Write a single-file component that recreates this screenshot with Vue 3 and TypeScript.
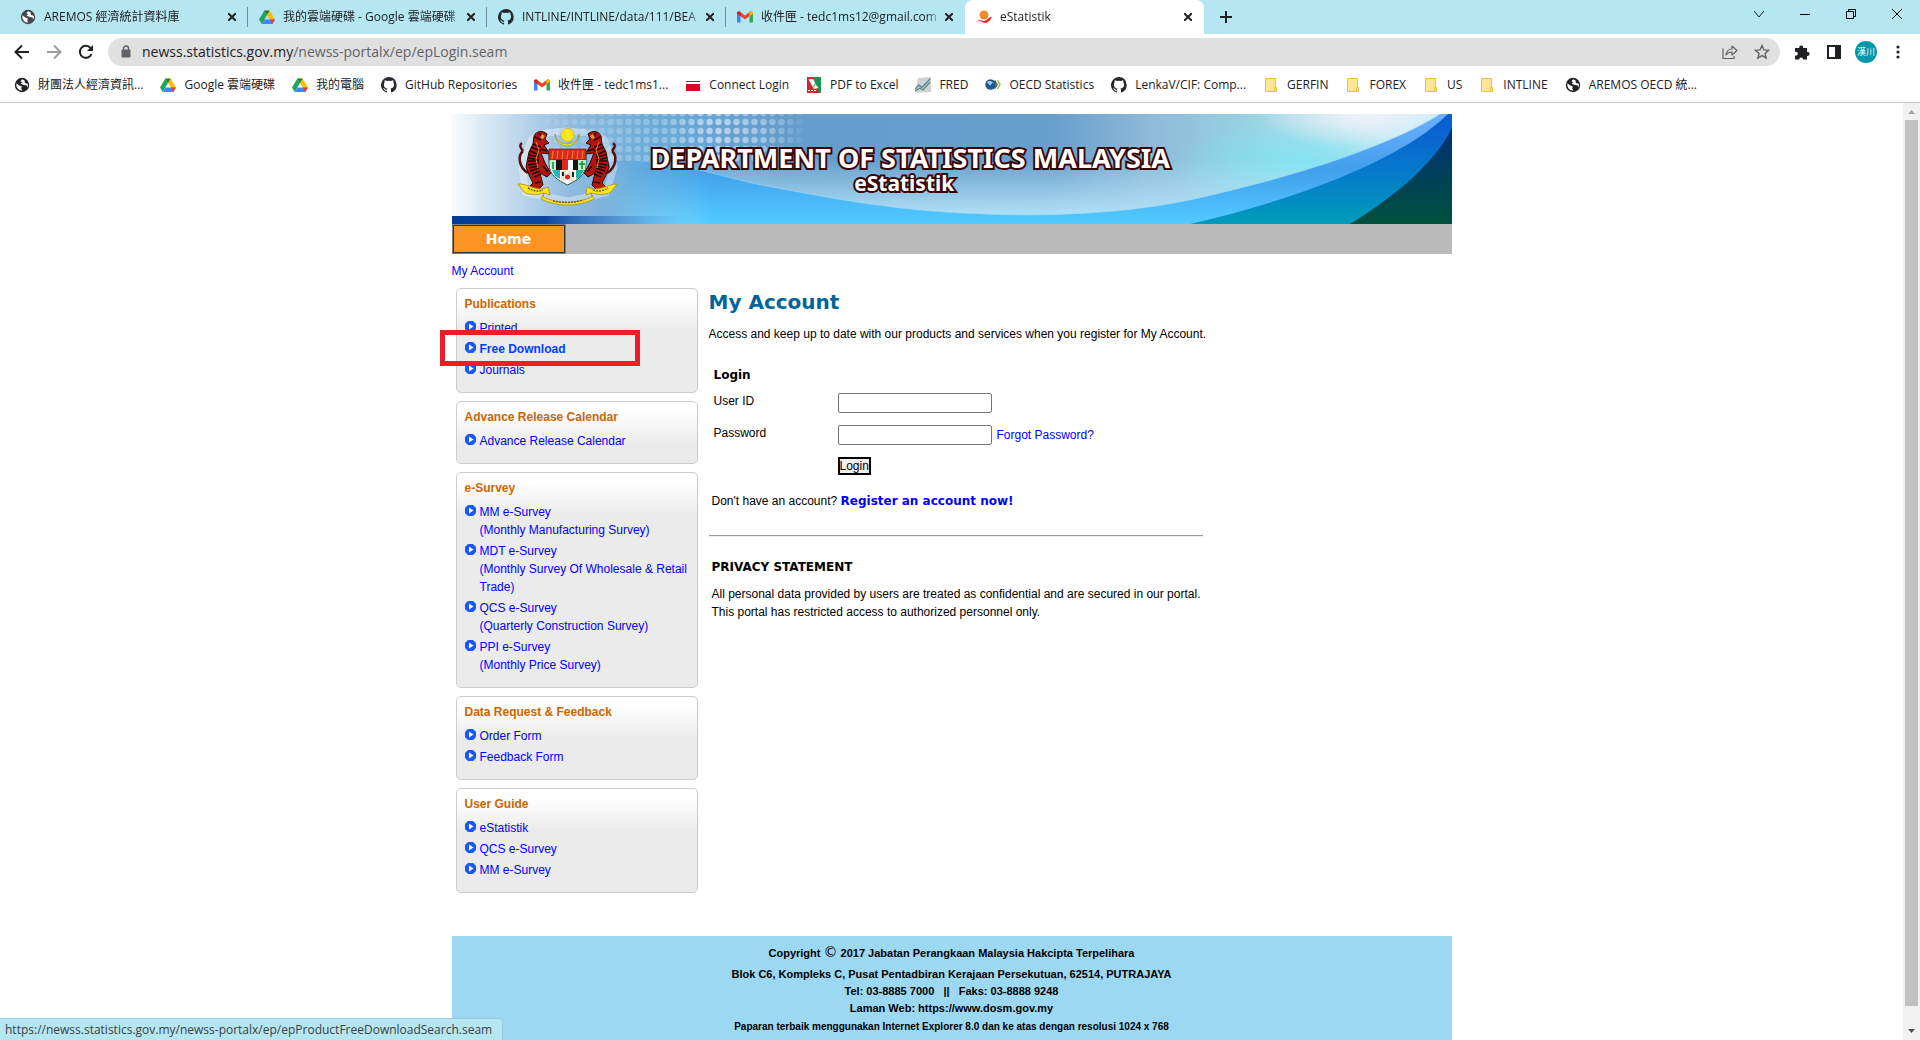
<script setup lang="ts">
import { ref } from 'vue'

interface Tab {
  icon: string
  title: string
  active?: boolean
}
interface Bookmark {
  icon: string
  title: string
}
interface MenuItem {
  label: string
  detail?: string
  hover?: boolean
}
interface Panel {
  title: string
  items: MenuItem[]
}

const tabs: Tab[] = [
  { icon: 'globe', title: 'AREMOS 經濟統計資料庫' },
  { icon: 'drive', title: '我的雲端硬碟 - Google 雲端硬碟' },
  { icon: 'github', title: 'INTLINE/INTLINE/data/111/BEA' },
  { icon: 'gmail', title: '收件匣 - tedc1ms12@gmail.com' },
  { icon: 'estat', title: 'eStatistik', active: true },
]

const bookmarks: Bookmark[] = [
  { icon: 'globe', title: '財團法人經濟資訊...' },
  { icon: 'drive', title: 'Google 雲端硬碟' },
  { icon: 'drive', title: '我的電腦' },
  { icon: 'github', title: 'GitHub Repositories' },
  { icon: 'gmail', title: '收件匣 - tedc1ms1...' },
  { icon: 'connect', title: 'Connect Login' },
  { icon: 'pdf', title: 'PDF to Excel' },
  { icon: 'fred', title: 'FRED' },
  { icon: 'oecd', title: 'OECD Statistics' },
  { icon: 'github', title: 'LenkaV/CIF: Comp...' },
  { icon: 'folder', title: 'GERFIN' },
  { icon: 'folder', title: 'FOREX' },
  { icon: 'folder', title: 'US' },
  { icon: 'folder', title: 'INTLINE' },
  { icon: 'globe', title: 'AREMOS OECD 統...' },
]

const panels: Panel[] = [
  {
    title: 'Publications',
    items: [{ label: 'Printed' }, { label: 'Free Download', hover: true }, { label: 'Journals' }],
  },
  { title: 'Advance Release Calendar', items: [{ label: 'Advance Release Calendar' }] },
  {
    title: 'e-Survey',
    items: [
      { label: 'MM e-Survey', detail: '(Monthly Manufacturing Survey)' },
      { label: 'MDT e-Survey', detail: '(Monthly Survey Of Wholesale & Retail Trade)' },
      { label: 'QCS e-Survey', detail: '(Quarterly Construction Survey)' },
      { label: 'PPI e-Survey', detail: '(Monthly Price Survey)' },
    ],
  },
  { title: 'Data Request & Feedback', items: [{ label: 'Order Form' }, { label: 'Feedback Form' }] },
  {
    title: 'User Guide',
    items: [{ label: 'eStatistik' }, { label: 'QCS e-Survey' }, { label: 'MM e-Survey' }],
  },
]

const userId = ref('')
const password = ref('')
</script>

<template>
  <div class="browser">
    <svg class="sprite" aria-hidden="true">
      <symbol id="globe" viewBox="0 0 16 16">
        <circle cx="8" cy="8" r="7.2" fill="currentColor" />
        <path d="M2.4 6.2 5.2 8.6 7.8 9.2 7.2 11.4 8.4 13.6A6 6 0 0 1 2.4 6.2ZM8.2 2.2 6.4 4.2 8.4 5.2 6.4 6.4 9.8 8 12.4 8.2 13.2 10.6A6 6 0 0 0 13.8 6.8L11 6 10.6 3.4Z" fill="#fff" />
      </symbol>
      <symbol id="drive" viewBox="0 0 16 16">
        <path d="M5.4 1.5h5.2L16 10.6h-5.2Z" fill="#fbbc04" />
        <path d="M5.4 1.5 8 6 2.7 15 0 10.6Z" fill="#1fa463" />
        <path d="M2.7 15 5.3 10.6H16L13.4 15Z" fill="#4285f4" />
        <path d="M10.8 10.6H16L13.4 15Z" fill="#ea4335" />
        <path d="M5.4 1.5h5.2L8 6Z" fill="#188038" />
      </symbol>
      <symbol id="github" viewBox="0 0 16 16">
        <path fill="#24292f" d="M8 0a8 8 0 0 0-2.5 15.6c.4.1.5-.2.5-.4v-1.500c-2.200.5-2.700-1-2.700-1-.4-.9-.9-1.200-.9-1.200-.7-.5.100-.5.100-.5.800.100 1.200.8 1.200.8.7 1.300 1.900.9 2.300.7.100-.5.300-.9.500-1.100-1.800-.2-3.600-.9-3.600-4 0-.9.300-1.600.8-2.100-.1-.2-.4-1 .1-2.100 0 0 .7-.2 2.200.8a7.600 7.600 0 0 1 4 0c1.500-1 2.200-.8 2.200-.8.4 1.100.2 1.900.1 2.100.5.600.8 1.300.8 2.100 0 3.100-1.900 3.700-3.700 3.900.3.300.6.800.6 1.500v2.200c0 .2.100.5.600.4A8 8 0 0 0 8 0Z" />
      </symbol>
      <symbol id="gmail" viewBox="0 0 16 16">
        <path d="M0 4.200V13.500h3.500V7Z" fill="#4285f4" />
        <path d="M12.500 7V13.500H16V4.200Z" fill="#34a853" />
        <path d="M0 4.200C0 2.600 1.800 1.800 3 2.700L8 6.500 13 2.700C14.200 1.800 16 2.600 16 4.200L12.500 7.200 8 10.500 3.500 7.200Z" fill="#ea4335" />
        <path d="M0 4.200C0 2.600 1.800 1.800 3.500 3V7.200L0 4.700Z" fill="#c5221f" />
        <path d="M16 4.200C16 2.600 14.200 1.800 12.500 3V7.200L16 4.700Z" fill="#fbbc04" />
      </symbol>
      <symbol id="estat" viewBox="0 0 16 16">
        <circle cx="8" cy="6" r="4.500" fill="#f58a2c" />
        <path d="M0 12.500C5 9.500 6 13 9.500 11.500 12 10.500 13 8 16 7.500 14 13 10 15 7.500 13.500 5 12 3 12 0 12.500Z" fill="#e8242c" />
      </symbol>
      <symbol id="connect" viewBox="0 0 16 16">
        <rect x="1" y="4" width="14" height="1" fill="#444" />
        <rect x="1" y="7" width="14" height="7" fill="#d80a2a" />
      </symbol>
      <symbol id="pdf" viewBox="0 0 16 16">
        <rect x="1" width="14" height="16" fill="#d9242b" />
        <path d="M7 0h8v16h-2Z" fill="#1f9153" />
        <path d="M2.500 2.500 7 2 12.500 11 8 12Z" fill="#fff" />
        <path d="M11 3.500 7.500 10M8.500 3.500 11.500 9.500" stroke="#1f9153" fill="none" />
        <path d="M2 13.500h8" stroke="#fff" stroke-dasharray="2 1" />
      </symbol>
      <symbol id="fred" viewBox="0 0 16 16">
        <path d="M3 1 16 0V15L0 16Z" fill="#cdd3d6" />
        <path d="M0 12 4 8 7 10.500 15 2" stroke="#5f86a5" stroke-width="1.500" fill="none" />
        <path d="M0 14 5 11 8 13 15 5" stroke="#5b8a63" stroke-width="1.200" fill="none" />
      </symbol>
      <symbol id="oecd" viewBox="0 0 16 16">
        <circle cx="5.500" cy="7.500" r="5.200" fill="#1d5a94" />
        <path d="M2 5.500C4 3 6 4 8 5.500L5 8.500Z" fill="#a9c8e2" />
        <path d="m9.500 3.500 2.500 4-2.500 4" stroke="#555" stroke-width="1.500" fill="none" />
        <path d="m12.500 3 2.500 4.500-2.500 4.500" stroke="#9bc23c" stroke-width="1.500" fill="none" />
      </symbol>
      <symbol id="folder" viewBox="0 0 16 16">
        <path d="M2.500 1.500h10v9h1v4h-11Z" fill="#ffe694" stroke="#e8c145" />
        <path d="M11.500 14v-3.500h1" fill="none" stroke="#e8c145" />
      </symbol>
      <symbol id="bullet" viewBox="0 0 11 11">
        <path d="M3 0h5l3 3v5l-3 3H3L0 8V3Z" fill="#1759ff" />
        <path d="M4 2.500 8.500 5.500 4 8.500Z" fill="#fff" />
      </symbol>
    </svg>

    <header class="chrome">
      <div class="tabstrip">
        <div class="tabs">
          <div v-for="tab in tabs" :key="tab.title" class="tab" :class="{ active: tab.active }">
            <svg class="icon"><use :href="'#' + tab.icon" /></svg>
            <span class="tab-title">{{ tab.title }}</span>
            <button class="plain tab-close" aria-label="Close tab">
              <svg width="8" height="8" viewBox="0 0 8 8"><path d="m0 0 8 8M8 0 0 8" stroke="#202124" stroke-width="2" /></svg>
            </button>
          </div>
        </div>
        <button class="plain new-tab" aria-label="New tab">
          <svg width="12" height="12" viewBox="0 0 12 12"><path d="M6 0v12M0 6h12" stroke="#202124" stroke-width="2" /></svg>
        </button>
        <div class="window-controls">
          <button class="plain" aria-label="Search tabs">
            <svg width="10" height="10" viewBox="0 0 10 10"><path d="m0 2 5 6 5-6" fill="none" stroke="#222" /></svg>
          </button>
          <button class="plain" aria-label="Minimize">
            <svg width="10" height="10" viewBox="0 0 10 10"><path d="M0 5.500h10" stroke="#000" /></svg>
          </button>
          <button class="plain" aria-label="Restore">
            <svg width="10" height="10" viewBox="0 0 10 10"><path d="M.5 2.500h7v7h-7ZM2.500 2.500v-2h7v7h-2" fill="none" stroke="#000" /></svg>
          </button>
          <button class="plain" aria-label="Close">
            <svg width="10" height="10" viewBox="0 0 10 10"><path d="m0 0 10 10M10 0 0 10" stroke="#000" /></svg>
          </button>
        </div>
      </div>

      <div class="toolbar">
        <button class="plain nav" aria-label="Back">
          <svg width="16" height="16" viewBox="0 0 16 16"><path d="M15 8H2M8 1.500 1.500 8 8 14.500" fill="none" stroke="#202124" stroke-width="2" /></svg>
        </button>
        <button class="plain nav" aria-label="Forward">
          <svg width="16" height="16" viewBox="0 0 16 16"><path d="M1 8h13M8 1.500 14.500 8 8 14.500" fill="none" stroke="#9a9c9e" stroke-width="2" /></svg>
        </button>
        <button class="plain nav" aria-label="Reload">
          <svg width="16" height="16" viewBox="0 0 16 16"><path d="M13.500 10A6 6 0 1 1 12.500 4" fill="none" stroke="#202124" stroke-width="2" /><path d="M15 1v6H9Z" fill="#202124" /></svg>
        </button>
        <div class="omnibox">
          <svg width="12" height="14" viewBox="0 0 12 14"><path d="M2 5h8v7H2Z" fill="#5f6368" stroke="#5f6368" stroke-linejoin="round" /><path d="M3.500 5V3.500a2.500 2.500 0 0 1 5 0V5" fill="none" stroke="#5f6368" stroke-width="1.500" /></svg>
          <span class="url">newss.statistics.gov.my<span class="path">/newss-portalx/ep/epLogin.seam</span></span>
          <button class="plain nav" aria-label="Share">
            <svg width="16" height="16" viewBox="0 0 16 16"><path d="M1 4.500V14.500h11V12" fill="none" stroke="#5f6368" stroke-width="1.200" /><path d="M4 11C4.500 7 7 5 10 5V2l5 4.500L10 11V8C7.500 8 5.500 9 4 11Z" fill="none" stroke="#5f6368" stroke-width="1.200" stroke-linejoin="round" /></svg>
          </button>
          <button class="plain nav" aria-label="Bookmark this tab">
            <svg width="16" height="16" viewBox="0 0 16 16"><path d="m8 1.500 1.900 4.400 4.700.4-3.600 3.100 1.100 4.700L8 11.600l-4.100 2.500L5 9.400 1.400 6.300l4.700-.4Z" fill="none" stroke="#5f6368" stroke-width="1.400" /></svg>
          </button>
        </div>
        <button class="plain nav" aria-label="Extensions">
          <svg width="16" height="16" viewBox="0 0 16 16"><path d="M1 4h4.300a2 2 0 1 1 3.800 0H13v4a2 2 0 1 1 0 3.800V15.500H9.200a2 2 0 1 0-4 0H1V11.500a2 2 0 1 0 0-3.700Z" fill="#202124" /></svg>
        </button>
        <button class="plain nav" aria-label="Side panel">
          <svg width="14" height="14" viewBox="0 0 14 14"><path d="M1 1h12v12H1Z" fill="none" stroke="#202124" stroke-width="2" /><path d="M8 1h5v12H8Z" fill="#202124" /></svg>
        </button>
        <button class="plain nav" aria-label="Profile"><span class="avatar">漢川</span></button>
        <button class="plain nav" aria-label="Menu">
          <svg width="4" height="14" viewBox="0 0 4 14" fill="#202124"><circle cx="2" cy="2" r="1.600" /><circle cx="2" cy="7" r="1.600" /><circle cx="2" cy="12" r="1.600" /></svg>
        </button>
      </div>

      <nav class="bookmarks">
        <a v-for="mark in bookmarks" :key="mark.title" href="#" class="bookmark">
          <svg class="icon"><use :href="'#' + mark.icon" /></svg>{{ mark.title }}
        </a>
      </nav>
    </header>

    <div class="viewport">
      <div class="page">
        <div class="banner">
          <svg class="banner-art" viewBox="0 0 1000 110" preserveAspectRatio="none" aria-hidden="true">
            <defs>
              <linearGradient id="sky">
                <stop offset="0" stop-color="#f8fbfd" />
                <stop offset=".06" stop-color="#c3daec" />
                <stop offset=".12" stop-color="#8fbade" />
                <stop offset=".2" stop-color="#6aabd8" />
                <stop offset=".33" stop-color="#649dcc" />
                <stop offset=".6" stop-color="#689fcd" />
                <stop offset=".7" stop-color="#8dbbd8" />
                <stop offset=".8" stop-color="#98d4e2" />
                <stop offset=".92" stop-color="#c4e8f3" />
                <stop offset="1" stop-color="#bceefc" />
              </linearGradient>
              <linearGradient id="shine" x2="0" y2="1">
                <stop offset=".4" stop-color="#b4e4f8" stop-opacity="0" />
                <stop offset=".92" stop-color="#b4e4f8" stop-opacity=".95" />
              </linearGradient>
              <radialGradient id="aqua">
                <stop offset="0" stop-color="#7ce4f2" stop-opacity=".9" />
                <stop offset="1" stop-color="#7ce4f2" stop-opacity="0" />
              </radialGradient>
              <radialGradient id="glow">
                <stop offset="0" stop-color="#f1f2fa" />
                <stop offset="1" stop-color="#f1f2fa" stop-opacity="0" />
              </radialGradient>
              <linearGradient id="waveTone" x2="0" y2="1">
                <stop offset="0" stop-color="#6fb0ff" />
                <stop offset=".5" stop-color="#419fec" />
                <stop offset="1" stop-color="#52cbff" />
              </linearGradient>
              <linearGradient id="waveFade">
                <stop offset=".15" stop-color="#000" />
                <stop offset=".26" stop-color="#fff" />
              </linearGradient>
              <linearGradient id="deep" x2="0" y2="1">
                <stop offset="0" stop-color="#0b5ad0" />
                <stop offset=".5" stop-color="#0678cc" />
                <stop offset="1" stop-color="#009cba" />
              </linearGradient>
              <linearGradient id="navy" x2="0" y2="1">
                <stop offset="0" stop-color="#002f78" />
                <stop offset="1" stop-color="#00513c" />
              </linearGradient>
              <linearGradient id="strip">
                <stop offset="0" stop-color="#003a94" />
                <stop offset=".4" stop-color="#0d47a0" />
                <stop offset="1" stop-color="#419fec" stop-opacity="0" />
              </linearGradient>
              <linearGradient id="dotFade">
                <stop offset="0" stop-color="#333" />
                <stop offset=".45" stop-color="#777" />
                <stop offset=".65" stop-color="#eee" />
                <stop offset=".85" stop-color="#999" />
                <stop offset="1" stop-color="#000" />
              </linearGradient>
              <pattern id="dots" width="9" height="9" patternUnits="userSpaceOnUse" x="91" y="3">
                <circle cx="4.500" cy="5" r="3.200" fill="#dbeafa" fill-opacity=".75" />
              </pattern>
              <mask id="dotMask"><rect x="91" width="265" height="48" fill="url(#dotFade)" /></mask>
              <mask id="waveMask" maskUnits="userSpaceOnUse" x="0" y="0" width="1000" height="110">
                <rect width="1000" height="110" fill="url(#waveFade)" />
              </mask>
            </defs>
            <rect width="1000" height="110" fill="url(#sky)" />
            <ellipse cx="850" cy="50" rx="130" ry="42" fill="url(#aqua)" />
            <ellipse cx="915" cy="0" rx="110" ry="34" fill="url(#glow)" />
            <g mask="url(#waveMask)">
              <rect width="1000" height="110" fill="url(#shine)" />
            </g>
            <rect x="91" width="265" height="48" fill="url(#dots)" mask="url(#dotMask)" />
            <g mask="url(#waveMask)">
              <path d="M130 46C240 44 270 65 320 73 400 88 460 100 575 101 690 100 740 86 788 74 870 54 950 25 988 0H1000V110H130Z" fill="url(#waveTone)" />
              <path d="M187 47C240 50 270 64 320 73 400 88 460 100 575 101 690 100 740 86 788 74 870 54 950 25 988 0" fill="none" stroke="#9adcf8" stroke-opacity=".6" />
            </g>
            <path d="M738 110C850 84 950 45 996 0H1000V110Z" fill="url(#deep)" />
            <path d="M898 110C950 78 985 45 1000 14V110Z" fill="url(#navy)" />
            <rect y="102" width="235" height="8" fill="url(#strip)" />
          </svg>
          <svg class="crest" viewBox="0 0 104 80" role="img" aria-label="Coat of arms of Malaysia">
            <g fill="none" stroke="#fff" stroke-opacity=".35" stroke-width="7" stroke-linejoin="round">
              <path d="M16 12 30 6 50 4 72 6 88 12 98 40 90 66 52 74 10 66 6 40Z" />
            </g>
            <path d="M39 7a12 12 0 1 0 24 0 12 10 0 1 1-24 0Z" fill="#ffe81a" stroke="#8a7a10" stroke-width=".5" />
            <circle cx="51.500" cy="8" r="6.500" fill="#ffe81a" stroke="#c8a600" stroke-dasharray="1.500 1" />
            <g id="tiger">
              <path d="M12 46C2 40 2 28 7 24M7 24C4 20 3 18 6 16" fill="none" stroke="#5c0e0a" stroke-width="2.500" />
              <path d="M18 9C20 4 27 3 31 7L29 12 33 16 28 18 34 27 25 26 29 36 35 46 31 50 24 46 27 58 22 63 12 61 17 56 13 48 10 40 13 25 17 17Z" fill="#b3150f" stroke="#2b0805" />
              <path d="m19 10 6 3M17 17l8 3M14 24l9 4M12 31l11 2M12 38l11-2M14 44l9-3M18 50l7-3M19 56l6-1M27 39l5 6M25 22l6 2M23 6l3 4M15 20l10 4M13 28l10 2M12 34h11M13 41l9-2M16 47l8-3" stroke="#210504" stroke-width="1.500" />
              <path d="m20 15 3 8-3 9 2 9" fill="none" stroke="#ef8131" />
              <path d="m26 7 3 2-2 3-3-1Z" fill="#e89a3b" />
            </g>
            <use href="#tiger" transform="matrix(-1 0 0 1 103 0)" />
            <path d="M33 23H70V36C70 49 61 53 51.500 58 42 53 33 49 33 36Z" fill="#fff" stroke="#245a4a" />
            <path d="M33 22H70V33H33Z" fill="#e1281e" stroke="#5d0d08" stroke-width=".6" />
            <path d="m37 24-1 8M42 24l-1 8M47 24l-1 8M52 24l-1 8M57 24l-1 8M62 24l-1 8M67 24l-1 8" stroke="#f4a33a" stroke-width=".8" />
            <path d="M40 33H46V43H40Z" fill="#151515" /><path d="M46 33H52V43H46Z" fill="#e1281e" />
            <path d="M52 33H57V43H52Z" fill="#fff" /><path d="M57 33H62V43H57Z" fill="#161616" />
            <path d="M34 33h6v10h-5ZM62 33h8l-1 10h-7Z" fill="#baf0c8" />
            <path d="M37 35v7M66 34v8M63 37h6" stroke="#158a35" stroke-width="1.500" />
            <path d="M36 43h8v9l-5-3Z" fill="#25b6be" /><path d="M60 43h8l-4 7-4 2Z" fill="#1bb5a8" />
            <path d="M45 44h5v10h-5M52 44h6v10h-5" fill="#e8e4c4" /><circle cx="51.500" cy="50" r="2.500" fill="#d8232a" />
            <path d="M47 45v4M57 45v5" stroke="#222" stroke-width="2" />
            <path d="M2 57C12 56 22 66 32 60L34 68 28 66 27 70C42 77 61 77 76 70L75 66 70 68 71 60C82 66 91 57 101 57L95 65C88 69 81 67 75 66L78 72C62 80 41 80 25 72L28 66C20 68 13 68 8 65Z" fill="#f7e627" stroke="#b08b12" stroke-width=".8" />
            <path d="M12 61c5 3 10 4 15 2M77 63c5 2 10 1 15-2M37 74c10 2 20 2 30-1" fill="none" stroke="#75600f" stroke-width="1.500" stroke-dasharray="2 1" />
          </svg>
          <div class="banner-text">
            <div class="department">DEPARTMENT OF STATISTICS MALAYSIA</div>
            <div class="system">eStatistik</div>
          </div>
        </div>
        <nav class="menubar"><a href="#" class="home">Home</a></nav>
        <div class="breadcrumb"><a href="#">My Account</a></div>

        <div class="columns">
          <aside class="sidebar">
            <section v-for="panel in panels" :key="panel.title" class="panel">
              <h2>{{ panel.title }}</h2>
              <ul>
                <li v-for="item in panel.items" :key="item.label" :class="{ hover: item.hover }">
                  <svg class="bullet"><use href="#bullet" /></svg>
                  <a href="#">{{ item.label }}<template v-if="item.detail"><br />{{ item.detail }}</template></a>
                </li>
              </ul>
            </section>
            <div class="callout"></div>
          </aside>

          <main class="content">
            <h1>My Account</h1>
            <p class="intro">Access and keep up to date with our products and services when you register for My Account.</p>
            <form class="login" @submit.prevent>
              <h3>Login</h3>
              <div class="field">
                <label for="user">User ID</label>
                <input id="user" v-model="userId" type="text" />
              </div>
              <div class="field">
                <label for="pass">Password</label>
                <input id="pass" v-model="password" type="password" />
                <a href="#" class="forgot">Forgot Password?</a>
              </div>
              <button type="submit" class="submit">Login</button>
            </form>
            <p class="register">Don't have an account? <a href="#">Register an account now!</a></p>
            <hr />
            <section class="privacy">
              <h3>PRIVACY STATEMENT</h3>
              <p>All personal data provided by users are treated as confidential and are secured in our portal.<br />This portal has restricted access to authorized personnel only.</p>
            </section>
          </main>
        </div>

        <footer class="footer">
          <div class="copyright">Copyright <span class="mark">©</span> 2017 Jabatan Perangkaan Malaysia Hakcipta Terpelihara</div>
          <div>Blok C6, Kompleks C, Pusat Pentadbiran Kerajaan Persekutuan, 62514, PUTRAJAYA</div>
          <div>Tel: 03-8885 7000 &nbsp; || &nbsp; Faks: 03-8888 9248</div>
          <div>Laman Web: https://www.dosm.gov.my</div>
          <div class="best">Paparan terbaik menggunakan Internet Explorer 8.0 dan ke atas dengan resolusi 1024 x 768</div>
        </footer>
      </div>

      <div class="scrollbar" aria-hidden="true">
        <svg width="17" height="17" viewBox="0 0 17 17"><path d="m5 11 3.500-4 3.500 4Z" fill="#a3a3a3" /></svg>
        <div class="thumb"></div>
        <svg width="17" height="17" viewBox="0 0 17 17"><path d="m5 6 3.500 4L12 6Z" fill="#505050" /></svg>
      </div>
      <div class="status">https://newss.statistics.gov.my/newss-portalx/ep/epProductFreeDownloadSearch.seam</div>
    </div>
  </div>
</template>

<style>
body {
  margin: 0;
}
</style>

<style scoped>
* {
  box-sizing: border-box;
}
.browser {
  display: flex;
  flex-direction: column;
  height: 100vh;
  overflow: hidden;
  background: #fff;
  color: #000;
  font: 12px/18px "Liberation Sans", Arial, sans-serif;
}
.sprite {
  position: absolute;
  width: 0;
  height: 0;
}
.plain {
  display: flex;
  align-items: center;
  justify-content: center;
  padding: 0;
  border: 0;
  background: none;
}
a {
  color: #00f;
  text-decoration: none;
}
h1,
h2,
h3,
p,
ul {
  margin: 0;
  padding: 0;
}
.icon {
  flex: none;
  width: 16px;
  height: 16px;
}

.chrome {
  flex: none;
  border-bottom: 1px solid #c8c8c8;
  color: #202124;
  font-family: "Open Sans", "Noto Sans CJK TC", sans-serif;
}
.tabstrip {
  display: flex;
  height: 34px;
  padding-left: 9px;
  background: #b4e7f2;
}
.tabs {
  display: flex;
  flex: 0 1 1195px;
  min-width: 0;
}
.tab {
  display: flex;
  flex: 1 1 0;
  align-items: center;
  min-width: 0;
  padding: 0 8px 0 11px;
  background: linear-gradient(#6e8d94, #6e8d94) right center / 1px 20px no-repeat;
}
.tab.active {
  border-radius: 8px 8px 0 0;
  background: #fff;
}
.tab:has(+ .active) {
  background: none;
}
.tab .icon {
  margin-right: 8px;
}
.tab:first-child {
  color: #45484c;
}
.tab-title {
  flex: 1;
  overflow: hidden;
  color: #202124;
  white-space: nowrap;
  mask-image: linear-gradient(90deg, #000 92%, transparent);
}
.tab-close {
  width: 16px;
  height: 16px;
}
.new-tab {
  width: 28px;
  margin-left: 8px;
}
.window-controls {
  display: flex;
  margin-left: auto;
}
.window-controls .plain {
  width: 46px;
  height: 28px;
}
.toolbar {
  display: flex;
  align-items: center;
  height: 36px;
  padding: 0 6px;
}
.nav {
  flex: none;
  width: 32px;
  height: 28px;
}
.omnibox {
  display: flex;
  flex: 1;
  align-items: center;
  height: 28px;
  margin: 0 6px;
  padding: 0 2px 0 12px;
  border-radius: 14px;
  background: #e0e0e0;
}
.url {
  flex: 1;
  margin-left: 10px;
  font-size: 14px;
}
.path {
  color: #5f6368;
}
.avatar {
  width: 22px;
  height: 22px;
  border-radius: 50%;
  background: #0097a7;
  color: #fff;
  font: 9px/22px "Noto Sans CJK TC", sans-serif;
}
.bookmarks {
  display: flex;
  gap: 17px;
  height: 32px;
  padding: 0 14px;
  overflow: hidden;
}
.bookmark {
  display: flex;
  gap: 8px;
  align-items: center;
  height: 30px;
  color: #202124;
  white-space: nowrap;
}

.viewport {
  display: flex;
  flex: 1;
  align-items: stretch;
  position: relative;
  min-height: 0;
  overflow: hidden;
}
.page {
  flex: 0 1 1000px;
  margin: 11px auto 0;
}
.scrollbar {
  display: flex;
  flex: none;
  flex-direction: column;
  align-items: center;
  background: #f1f1f1;
}
.thumb {
  flex: 1;
  width: 13px;
  margin-bottom: 17px;
  background: #c1c1c1;
}
.status {
  position: absolute;
  bottom: 0;
  left: 0;
  height: 22px;
  padding: 0 10px 0 5px;
  border-top: 1px solid #9fc9d6;
  border-right: 1px solid #9fc9d6;
  border-top-right-radius: 4px;
  background: #b4e7f2;
  color: #3c4043;
  font: 12px/22px "Open Sans", sans-serif;
}

.banner {
  position: relative;
  height: 110px;
}
.banner-art {
  display: block;
  width: 100%;
  height: 100%;
}
.crest {
  position: absolute;
  top: 13px;
  left: 64px;
  width: 104px;
  height: 80px;
}
.banner-text {
  position: absolute;
  top: 30px;
  left: 199px;
  color: #fff;
  font-family: "Noto Sans", sans-serif;
  font-weight: 700;
  text-align: center;
  white-space: nowrap;
  -webkit-text-stroke: 4px #3a0505;
  paint-order: stroke fill;
}
.department {
  font-size: 27px;
  line-height: 28px;
}
.system {
  margin-right: 12px;
  font-size: 21px;
  line-height: 22px;
}
.menubar {
  display: flex;
  height: 30px;
  background: #bababa;
}
.home {
  width: 114px;
  border: 1px solid #808080;
  background: #fb9423;
  box-shadow: inset 0 0 0 1px #333;
  color: #fff;
  font: bold 14px/29px "DejaVu Sans", Verdana, sans-serif;
  text-align: center;
}
.breadcrumb {
  padding: 8px 0;
}
.columns {
  display: flex;
  gap: 11px;
  padding-left: 4px;
}
.sidebar {
  display: flex;
  flex: none;
  flex-direction: column;
  gap: 8px;
  position: relative;
  width: 242px;
}
.panel {
  padding: 6px 8px 10px;
  border: 1px solid #ccc;
  border-radius: 5px;
  background: linear-gradient(#fff 8px, #ebebeb 42px);
}
.panel h2 {
  margin-bottom: 6px;
  color: #cc6600;
  font-size: 12px;
}
.panel ul {
  list-style: none;
}
.panel li {
  display: flex;
  gap: 4px;
  margin-bottom: 3px;
}
.hover a {
  color: #0040ff;
  font-weight: 700;
}
.bullet {
  flex: none;
  width: 11px;
  height: 11px;
  margin-top: 2px;
}
.callout {
  position: absolute;
  top: 42px;
  left: -16px;
  width: 200px;
  height: 36px;
  border: 5px solid #ee1c25;
}
.content {
  width: 494px;
  padding-top: 1px;
}
h1 {
  color: #006699;
  font: bold 20px/26px "DejaVu Sans", Verdana, sans-serif;
}
.intro {
  margin-top: 10px;
  white-space: nowrap;
}
h3 {
  font: bold 12px/18px "DejaVu Sans", Verdana, sans-serif;
}
.login {
  padding: 23px 0 0 5px;
}
.field {
  display: flex;
  gap: 5px;
  height: 32px;
}
.login h3 {
  margin-bottom: 9px;
}
.field label {
  width: 119px;
  line-height: 16px;
}
.field input {
  width: 154px;
  height: 20px;
  border: 1px solid #767676;
  border-radius: 2px;
  background: #fff;
}
.forgot {
  line-height: 20px;
}
.submit {
  display: block;
  height: 18px;
  margin-left: 124px;
  padding: 0;
  border: 2px solid #000;
  background: #efefef;
  font: 12px/14px "Liberation Sans", Arial, sans-serif;
}
.register {
  padding: 17px 0 0 3px;
}
.register a {
  font: bold 12px/18px "DejaVu Sans", Verdana, sans-serif;
}
hr {
  height: 2px;
  margin: 25px 0 21px;
  border: 0;
  border-top: 1px solid #999;
  border-bottom: 1px solid #eee;
}
.privacy {
  padding-left: 3px;
}
.privacy p {
  margin-top: 9px;
  white-space: nowrap;
}
.footer {
  height: 130px;
  margin-top: 43px;
  padding-top: 8px;
  background: #9dd8f3;
  font-size: 11px;
  font-weight: 700;
  line-height: 17px;
  text-align: center;
}
.copyright {
  margin-bottom: 4px;
  line-height: 18px;
}
.mark {
  font: 14px/16px "DejaVu Sans", sans-serif;
}
.best {
  font-size: 10px;
  line-height: 19px;
}
</style>
